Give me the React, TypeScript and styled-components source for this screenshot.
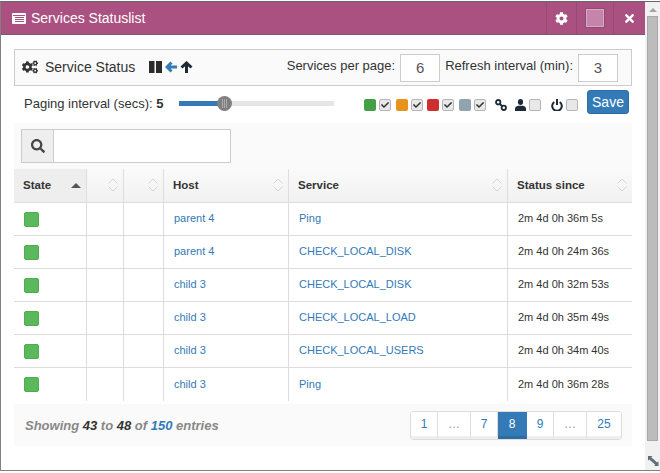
import { createGlobalStyle, styled } from "styled-components";
import { FaCheck, FaCog, FaCogs, FaSearch, FaTimes } from "react-icons/fa";

const rows = [
  { host: "parent 4", service: "Ping", since: "2m 4d 0h 36m 5s" },
  { host: "parent 4", service: "CHECK_LOCAL_DISK", since: "2m 4d 0h 24m 36s" },
  { host: "child 3", service: "CHECK_LOCAL_DISK", since: "2m 4d 0h 32m 53s" },
  { host: "child 3", service: "CHECK_LOCAL_LOAD", since: "2m 4d 0h 35m 49s" },
  { host: "child 3", service: "CHECK_LOCAL_USERS", since: "2m 4d 0h 34m 40s" },
  { host: "child 3", service: "Ping", since: "2m 4d 0h 36m 28s" },
];

const pages = [
  { label: "1", w: 27 },
  { label: "…", w: 33, muted: true },
  { label: "7", w: 27 },
  { label: "8", w: 29, active: true },
  { label: "9", w: 27 },
  { label: "…", w: 33, muted: true },
  { label: "25", w: 34 },
];

const GlobalStyle = createGlobalStyle`
  html, body {
    margin: 0;
    padding: 0;
    background: #fff;
  }
  body {
    font-family: "Liberation Sans", Arial, sans-serif;
    color: #333;
  }
`;

const Page = styled.div`
  width: 660px;
  height: 473px;
  padding-top: 1px;
  box-sizing: border-box;
  background: #fff;
`;

const Frame = styled.div`
  position: relative;
  display: flex;
  width: 660px;
  height: 470px;
  box-sizing: border-box;
  border-top: 1px solid #666;
  border-bottom: 1px solid #808080;
  border-left: 1px solid #808080;
`;

const Main = styled.div`
  flex: 1;
  min-width: 0;
  display: flex;
  flex-direction: column;
`;

const TitleBar = styled.div`
  display: flex;
  align-items: stretch;
  height: 33px;
  box-sizing: border-box;
  background: #aa5181;
  border-bottom: 1px solid #7a5a6c;
  color: #fff;
`;

const Title = styled.div`
  flex: 1;
  display: flex;
  align-items: center;
  gap: 5px;
  padding-left: 11px;
  font-size: 14px;
`;

const TitleButton = styled.div<{ $w: number }>`
  display: flex;
  align-items: center;
  justify-content: center;
  width: ${(p) => p.$w}px;
  border-left: 1px solid #974a73;
  font-size: 13px;
`;

const Swatch = styled.div`
  width: 20px;
  height: 20px;
  box-sizing: border-box;
  background: #c585aa;
  border: 1px solid #8a4f70;
  box-shadow: inset 0 0 0 1px #d9a9c4;
`;

const Content = styled.div`
  display: flex;
  flex-direction: column;
  padding: 14px 13px 0 13px;
`;

const Toolbar = styled.div`
  display: flex;
  align-items: center;
  height: 37px;
  box-sizing: border-box;
  padding: 0 13px 0 7px;
  background: #fafafa;
  border: 1px solid #ccc;
`;

const ToolbarTitle = styled.div`
  display: flex;
  align-items: center;
  gap: 7px;
  margin-bottom: 2px;
  font-size: 14px;
  svg {
    font-size: 16px;
  }
`;

const ToolIcons = styled.div`
  display: flex;
  align-items: center;
  gap: 3px;
  margin: 0 0 2px 14px;
`;

const ToolFields = styled.div`
  margin-left: auto;
  display: flex;
  align-items: center;
  font-size: 13px;
`;

const FieldLabel = styled.span`
  margin-bottom: 4px;
`;

const NumberBox = styled.div`
  display: flex;
  align-items: center;
  justify-content: center;
  width: 40px;
  height: 28px;
  box-sizing: border-box;
  margin: 0 5px;
  background: #fff;
  border: 1px solid #ccc;
  color: #555;
  font-size: 15px;
  &:last-child {
    margin-right: 0;
  }
`;

const PagingRow = styled.div`
  display: flex;
  align-items: center;
  height: 30px;
  padding: 2px 3px 0 10px;
  box-sizing: border-box;
  font-size: 13px;
  margin-bottom: 7px;
`;

const PagingLabel = styled.div`
  width: 155px;
  margin-top: 2px;
  b {
    font-weight: 700;
  }
`;

const Slider = styled.div`
  position: relative;
  width: 155px;
  height: 5px;
  margin-top: 3px;
  background: #e6e6e6;
`;

const SliderFill = styled.div`
  height: 100%;
  background: #337ab7;
`;

const SliderHandle = styled.div`
  position: absolute;
  top: -5px;
  width: 15px;
  height: 15px;
  margin-left: -7px;
  border-radius: 50%;
  background: repeating-linear-gradient(90deg, #808080 0 1px, #aaa 1px 2px) center / 7px 9px no-repeat #808080;
`;

const Filters = styled.div`
  margin-left: auto;
  display: flex;
  align-items: center;
`;

const FilterGroup = styled.div`
  display: flex;
  align-items: center;
  margin-top: 6px;
`;

const Dot = styled.div<{ $c: string }>`
  width: 12px;
  height: 12px;
  border-radius: 2px;
  background: ${(p) => p.$c};
  margin-right: 3px;
`;

const Check = styled.div<{ $gap?: number }>`
  display: flex;
  align-items: center;
  justify-content: center;
  width: 12px;
  height: 12px;
  box-sizing: border-box;
  border: 1px solid #b5b5b5;
  border-radius: 2px;
  background: #e8e8e8;
  color: #333;
  font-size: 8px;
  margin-right: ${(p) => p.$gap ?? 4.5}px;
`;

const FilterIcon = styled.span<{ $left: number }>`
  display: flex;
  margin: 0 3px 0 ${(p) => p.$left}px;
`;

const SaveButton = styled.button`
  height: 24px;
  width: 42px;
  padding: 0;
  margin-left: 9px;
  border: 1px solid #2e6da4;
  border-radius: 3px;
  background: #337ab7;
  color: #fff;
  font-family: inherit;
  font-size: 14px;
`;

const SearchBar = styled.div`
  height: 46px;
  box-sizing: border-box;
  padding: 6px 7px;
  background: #fafafa;
`;

const SearchGroup = styled.div`
  display: flex;
  width: 210px;
  height: 34px;
  box-sizing: border-box;
  border: 1px solid #ccc;
  background: #fff;
`;

const SearchAddon = styled.div`
  display: flex;
  align-items: center;
  justify-content: center;
  width: 31px;
  background: #eee;
  border-right: 1px solid #ccc;
  color: #444;
  font-size: 14px;
`;

const Table = styled.div`
  display: grid;
  grid-template-columns: 73px 37px 40px 125px 219px 124px;
`;

const HeadCell = styled.div<{ $first?: boolean; $last?: boolean }>`
  display: flex;
  align-items: center;
  justify-content: space-between;
  height: 34px;
  box-sizing: border-box;
  padding: 0 ${(p) => (p.$first ? 5 : 4)}px 1px 9px;
  background: ${(p) => (p.$first ? "#eee" : "linear-gradient(#fafafa, #f1f1f1)")};
  border-bottom: 1px solid #ddd;
  border-right: ${(p) => (p.$last ? "0" : "1px solid #ddd")};
  font-size: 11.5px;
  font-weight: 700;
`;

const Cell = styled.div<{ $end?: boolean; $bottom?: boolean }>`
  display: flex;
  align-items: center;
  height: 33px;
  box-sizing: border-box;
  padding: 0 10px;
  border-bottom: ${(p) => (p.$bottom ? "0" : "1px solid #ddd")};
  border-right: ${(p) => (p.$end ? "0" : "1px solid #ddd")};
  font-size: 11px;
`;

const CellText = styled.span`
  margin-bottom: 2px;
`;

const StateSquare = styled.div`
  width: 15px;
  height: 15px;
  box-sizing: border-box;
  border-radius: 2px;
  background: #5cb85c;
  border: 1px solid #4cae4c;
`;

const CellLink = styled.a`
  margin-bottom: 2px;
  color: #337ab7;
  text-decoration: none;
`;

const Footer = styled.div`
  display: flex;
  align-items: center;
  justify-content: space-between;
  height: 42px;
  margin-top: 3px;
  padding: 0 10px 0 11px;
  background: #fafafa;
`;

const Showing = styled.div`
  font-size: 13px;
  font-style: italic;
  font-weight: 700;
  color: #888;
`;

const Num = styled.span<{ $c: string }>`
  color: ${(p) => p.$c};
`;

const Pagination = styled.div`
  display: flex;
  height: 29px;
  box-sizing: border-box;
  border: 1px solid #ddd;
  border-radius: 3px;
  overflow: hidden;
  background: #fff;
`;

const PageItem = styled.div<{ $w: number; $active?: boolean; $muted?: boolean }>`
  display: flex;
  align-items: center;
  justify-content: center;
  width: ${(p) => p.$w}px;
  box-sizing: border-box;
  border-bottom: 3px solid ${(p) => (p.$active ? "#2e6da4" : "#eee")};
  border-right: 1px solid ${(p) => (p.$active ? "#337ab7" : "#ddd")};
  background: ${(p) => (p.$active ? "#337ab7" : "#fff")};
  color: ${(p) => (p.$active ? "#fff" : p.$muted ? "#999" : "#337ab7")};
  font-size: 12px;
  &:last-child {
    border-right: 0;
  }
`;

const Scrollbar = styled.div`
  display: flex;
  flex-direction: column;
  align-items: center;
  width: 15px;
  background: #f1f1f1;
`;

const ScrollArrow = styled.div`
  margin: 6px 0 4px;
  width: 0;
  height: 0;
  border-left: 4px solid transparent;
  border-right: 4px solid transparent;
  border-bottom: 4px solid #a3a3a3;
`;

const ScrollThumb = styled.div`
  width: 11px;
  height: 425px;
  box-sizing: border-box;
  border: 1px solid #a8a8a8;
  background: #bcbcbc;
`;

const ResizeGrip = styled.svg`
  position: absolute;
  right: 0;
  bottom: 3px;
  width: 13px;
  height: 12px;
`;

const ListIcon = () => (
  <svg width="14" height="11" viewBox="0 0 14 11">
    <rect width="14" height="11" rx="1" fill="#fff" />
    <path d="M1 2.500h12M3 4.500h9M3 6.500h9M3 8.500h9" stroke="#aa5181" strokeWidth="1" />
  </svg>
);

const PauseIcon = () => (
  <svg width="13" height="12" viewBox="0 0 13 12" fill="#2b2b2b">
    <rect width="5.500" height="12" />
    <rect x="7" width="6" height="12" />
  </svg>
);

const ArrowLeftIcon = () => (
  <svg width="12" height="12" viewBox="0 0 12 12" fill="none" stroke="#337ab7" strokeWidth="3">
    <path d="M6.500 1.500 2 6l4.500 4.500M2.500 6H12" />
  </svg>
);

const ArrowUpIcon = () => (
  <svg width="13" height="12" viewBox="0 0 13 12" fill="none" stroke="#1d2a36" strokeWidth="3">
    <path d="M1.500 6.500 6.500 2l5 4.500M6.500 3v9" />
  </svg>
);

const ChainIcon = () => (
  <svg width="12" height="12" viewBox="0 0 12 12" fill="none" stroke="#1d2a36" strokeWidth="1.800">
    <circle cx="3.200" cy="3.200" r="2.200" />
    <circle cx="8.800" cy="8.800" r="2.200" />
    <path d="M4.500 4.500l3 3" />
  </svg>
);

const UserIcon = () => (
  <svg width="11" height="12" viewBox="0 0 11 12" fill="#1d2a36">
    <ellipse cx="5.500" cy="3" rx="2.600" ry="3" />
    <path d="M0 12V9.500Q0 7.500 3 6.800H8Q11 7.500 11 9.500V12Z" />
  </svg>
);

const PowerIcon = () => (
  <svg width="12" height="12" viewBox="0 0 12 12" fill="none" stroke="#1d2a36" strokeWidth="2">
    <path d="M3.300 3A4.800 4.800 0 1 0 8.700 3M6 0v6" />
  </svg>
);

const SortCaret = () => (
  <svg width="12" height="14" viewBox="0 0 12 14" fill="none" stroke="#d4d4d4" strokeWidth="1">
    <path d="M1.500 5.500 6 1l4.500 4.500M1.500 8.500 6 13l4.500-4.500" />
  </svg>
);

const SortUp = () => (
  <svg width="10" height="5" viewBox="0 0 10 5">
    <path d="M0 5 5 0l5 5z" fill="#555" />
  </svg>
);

const StatusRow = ({
  host,
  service,
  since,
  bottom,
}: {
  host: string;
  service: string;
  since: string;
  bottom: boolean;
}) => (
  <>
    <Cell $bottom={bottom}>
      <StateSquare />
    </Cell>
    <Cell $bottom={bottom} />
    <Cell $bottom={bottom} />
    <Cell $bottom={bottom}>
      <CellLink>{host}</CellLink>
    </Cell>
    <Cell $bottom={bottom}>
      <CellLink>{service}</CellLink>
    </Cell>
    <Cell $bottom={bottom} $end>
      <CellText>{since}</CellText>
    </Cell>
  </>
);

const App = () => {
  return (
    <Page>
      <GlobalStyle />
      <Frame>
        <Main>
          <TitleBar>
            <Title>
              <ListIcon />
              Services Statuslist
            </Title>
            <TitleButton $w={29}>
              <FaCog />
            </TitleButton>
            <TitleButton $w={36}>
              <Swatch />
            </TitleButton>
            <TitleButton $w={31}>
              <FaTimes />
            </TitleButton>
          </TitleBar>
          <Content>
            <Toolbar>
              <ToolbarTitle>
                <FaCogs />
                Service Status
              </ToolbarTitle>
              <ToolIcons>
                <PauseIcon />
                <ArrowLeftIcon />
                <ArrowUpIcon />
              </ToolIcons>
              <ToolFields>
                <FieldLabel>Services per page:</FieldLabel>
                <NumberBox>6</NumberBox>
                <FieldLabel>Refresh interval (min):</FieldLabel>
                <NumberBox>3</NumberBox>
              </ToolFields>
            </Toolbar>
            <PagingRow>
              <PagingLabel>
                Paging interval (secs): <b>5</b>
              </PagingLabel>
              <Slider>
                <SliderFill style={{ width: "29%" }} />
                <SliderHandle style={{ left: "29%" }} />
              </Slider>
              <Filters>
                <FilterGroup>
                  <Dot $c="#43a047" />
                  <Check><FaCheck /></Check>
                  <Dot $c="#e8931e" />
                  <Check><FaCheck /></Check>
                  <Dot $c="#cf2e2e" />
                  <Check><FaCheck /></Check>
                  <Dot $c="#90a4ae" />
                  <Check $gap={0}><FaCheck /></Check>
                  <FilterIcon $left={9.5}><ChainIcon /></FilterIcon>
                  <FilterIcon $left={5}><UserIcon /></FilterIcon>
                  <Check $gap={0} />
                  <FilterIcon $left={10}><PowerIcon /></FilterIcon>
                  <Check $gap={0} />
                </FilterGroup>
                <SaveButton>Save</SaveButton>
              </Filters>
            </PagingRow>
            <SearchBar>
              <SearchGroup>
                <SearchAddon>
                  <FaSearch />
                </SearchAddon>
              </SearchGroup>
            </SearchBar>
            <Table>
              <HeadCell $first>
                State
                <SortUp />
              </HeadCell>
              <HeadCell>
                <span />
                <SortCaret />
              </HeadCell>
              <HeadCell>
                <span />
                <SortCaret />
              </HeadCell>
              <HeadCell>
                Host
                <SortCaret />
              </HeadCell>
              <HeadCell>
                Service
                <SortCaret />
              </HeadCell>
              <HeadCell $last>
                Status since
                <SortCaret />
              </HeadCell>
              {rows.map((row, i) => (
                <StatusRow key={i} {...row} bottom={i === rows.length - 1} />
              ))}
            </Table>
            <Footer>
              <Showing>
                Showing <Num $c="#333">43</Num> to <Num $c="#333">48</Num> of{" "}
                <Num $c="#337ab7">150</Num> entries
              </Showing>
              <Pagination>
                {pages.map((p, i) => (
                  <PageItem key={i} $w={p.w} $active={p.active} $muted={p.muted}>
                    {p.label}
                  </PageItem>
                ))}
              </Pagination>
            </Footer>
          </Content>
        </Main>
        <Scrollbar>
          <ScrollArrow />
          <ScrollThumb />
        </Scrollbar>
        <ResizeGrip viewBox="0 0 13 12">
          <path d="M1 1h4.500L4.200 2.300 10.200 7.500 11.500 6.200V11H7l1.300-1.300-6-5.200L1 5.800z" fill="#5f6f78" />
        </ResizeGrip>
      </Frame>
    </Page>
  );
};

export default App;
